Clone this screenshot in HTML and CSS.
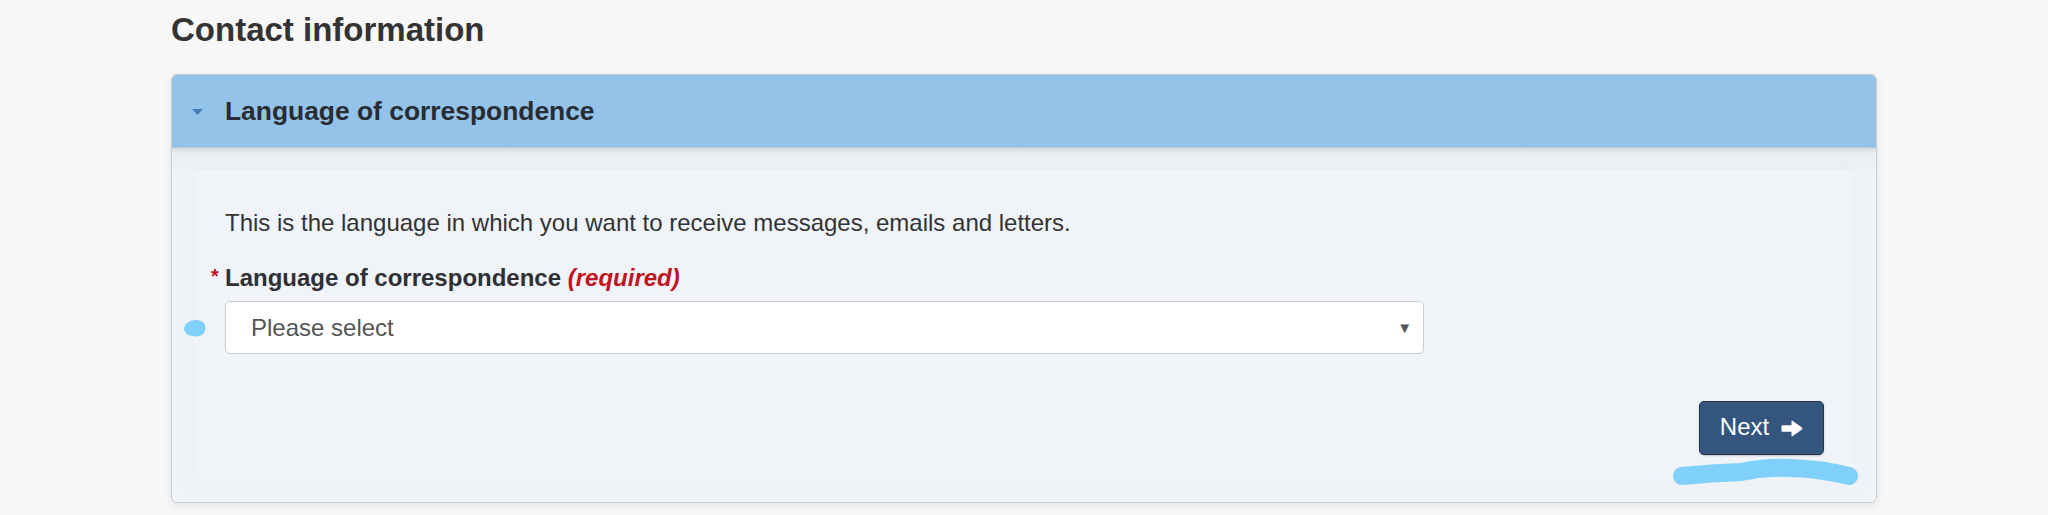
FILE: index.html
```html
<!DOCTYPE html>
<html lang="en">
<head>
<meta charset="utf-8">
<title>Contact information</title>
<link rel="stylesheet" href="styles.css">
</head>
<body>
<main class="page">
  <h1 class="title">Contact information</h1>
  <section class="panel">
    <header class="panel-head">
      <svg class="caret" width="11" height="6" viewBox="0 0 11 6"><path d="M0 0 H11 L5.5 6 Z" fill="#3f7cb8"/></svg>
      <h2 class="panel-title">Language of correspondence</h2>
    </header>
    <div class="panel-body">
      <div class="well">
        <p class="intro">This is the language in which you want to receive messages, emails and letters.</p>
        <label class="field-label"><span class="star">*</span>Language of correspondence <em class="req">(required)</em></label>
        <div class="select">
          <span class="select-text">Please select</span>
          <span class="select-arrow">&#9660;</span>
        </div>
        <div class="actions">
          <button class="btn-next">Next
            <svg class="arrow" width="22" height="17" viewBox="0 0 22 17"><path d="M1.5 5.2 H10.5 V1 Q10.5 0 11.4 0.7 L21 7.6 Q22 8.5 21 9.4 L11.4 16.3 Q10.5 17 10.5 16 V11.8 H1.5 Q0.5 11.8 0.5 10.8 V6.2 Q0.5 5.2 1.5 5.2 Z" fill="#ffffff"/></svg>
          </button>
        </div>
        <svg class="mark-dot" width="24" height="19" viewBox="0 0 24 19"><path d="M4 4 Q10 -1 18 2 Q24 5 22 12 Q19 19 10 17 Q1 16 1 9 Q1 6 4 4 Z" fill="#7fd0fa"/></svg>
        <svg class="mark-line" width="190" height="36" viewBox="0 0 190 36"><path d="M11 18 Q40 15 70 14 Q95 9 120 10 Q150 11 178 18" stroke="#7fd0fa" stroke-width="18" stroke-linecap="round" fill="none"/></svg>
      </div>
    </div>
  </section>
</main>
</body>
</html>
```
FILE: styles.css
```css
html, body {
  margin: 0;
  padding: 0;
}
body {
  background: #f7f7f7;
  font-family: "Liberation Sans", Arial, sans-serif;
  color: #333333;
  width: 2048px;
  height: 515px;
  overflow: hidden;
}
.page {
  padding: 10px 0 0 171px;
  width: 1706px;
}
.title {
  margin: 0 0 24px 0;
  font-size: 33px;
  line-height: 40px;
  font-weight: bold;
  color: #333333;
}
.panel {
  border: 1px solid #c7ccd2;
  border-radius: 6px;
  background: #eff3f7;
  box-shadow: 0 2px 8px rgba(0,0,0,0.08);
  overflow: hidden;
}
.panel-head {
  height: 73px;
  background: #93c3e8;
  display: flex;
  align-items: center;
  padding-left: 20px;
  box-shadow: 0 2px 5px rgba(0,0,0,0.10);
  position: relative;
  z-index: 1;
  border-bottom: 1px solid #b5c9da;
  box-sizing: border-box;
}
.caret {
  margin-right: 22px;
  margin-top: 2px;
}
.panel-title {
  margin: 0;
  font-size: 26.4px;
  font-weight: bold;
  color: #282d33;
}
.panel-body {
  padding: 22px;
  background: linear-gradient(#e8ecf1, #f0f3f7 28px);
}
.well {
  position: relative;
  padding: 37px 30px 25px 31px;
  background: #f0f3f7;
  box-shadow: 0 0 16px rgba(200,212,228,0.12);
}
.intro {
  margin: 0;
  font-size: 24px;
  line-height: 32px;
  color: #333333;
}
.field-label {
  display: block;
  margin-top: 21px;
  font-size: 24px;
  line-height: 32px;
  font-weight: bold;
  color: #2e3034;
}
.star {
  display: inline-block;
  width: 14px;
  margin-left: -14px;
  color: #c0141e;
  font-size: 20px;
  vertical-align: 3px;
}
.req {
  color: #c0141e;
  font-style: italic;
}
.select {
  margin-top: 7px;
  width: 1199px;
  height: 53px;
  box-sizing: border-box;
  border: 1px solid #cccccc;
  border-radius: 5px;
  background: #ffffff;
  display: flex;
  align-items: center;
  justify-content: space-between;
  padding: 0 11px 0 25px;
}
.select-text {
  font-size: 24px;
  color: #555555;
}
.select-arrow {
  font-size: 15px;
  color: #555555;
}
.actions {
  margin-top: 47px;
  display: flex;
  justify-content: flex-end;
}
.btn-next {
  width: 125px;
  height: 54px;
  box-sizing: border-box;
  background: #34557e;
  border: 1px solid #1f3550;
  border-radius: 5px;
  color: #ffffff;
  font-family: "Liberation Sans", Arial, sans-serif;
  font-size: 24px;
  display: flex;
  align-items: center;
  justify-content: center;
  gap: 12px;
  padding: 0 0 2px 0;
  box-shadow: 0 1px 2px rgba(0,0,0,0.2);
}
.arrow {
  margin-top: 2px;
}
.mark-dot {
  position: absolute;
  left: -11px;
  top: 149px;
}
.mark-line {
  position: absolute;
  right: -7px;
  bottom: -14px;
}
```
